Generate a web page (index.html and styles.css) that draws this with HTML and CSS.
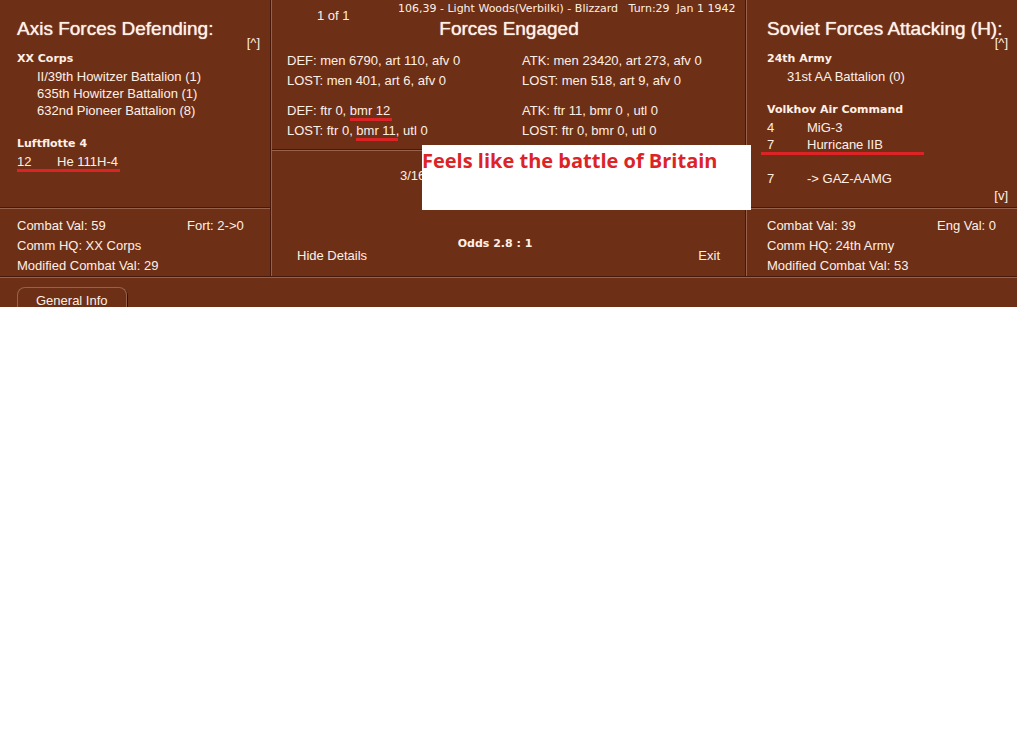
FILE: index.html
```html
<!DOCTYPE html>
<html lang="en">
<head>
<meta charset="utf-8">
<title>Forces Engaged</title>
<link rel="stylesheet" href="styles.css">
</head>
<body>
<main class="report">
  <div class="columns">
    <section class="side">
      <div class="roster">
        <h2 class="title">Axis Forces Defending:</h2>
        <button class="scroll scroll-up" type="button">[^]</button>
        <h3 class="group">XX Corps</h3>
        <ul class="units">
          <li>II/39th Howitzer Battalion (1)</li>
          <li>635th Howitzer Battalion (1)</li>
          <li>632nd Pioneer Battalion (8)</li>
        </ul>
        <h3 class="group">Luftflotte 4</h3>
        <div class="air"><div class="craft marked"><span>12</span><span>He 111H-4</span></div></div>
      </div>
      <div class="values">
        <div class="pair"><span>Combat Val: 59</span><span class="extra">Fort: 2-&gt;0</span></div>
        <div>Comm HQ: XX Corps</div>
        <div>Modified Combat Val: 29</div>
      </div>
    </section>

    <section class="middle">
      <div class="summary">
        <div class="topline"><span class="page">1 of 1</span><span class="place">106,39 - Light Woods(Verbilki) - Blizzard   Turn:29  Jan 1 1942</span></div>
        <h1 class="title">Forces Engaged</h1>
        <div class="losses">
          <div>DEF: men 6790, art 110, afv 0</div><div>ATK: men 23420, art 273, afv 0</div>
          <div>LOST: men 401, art 6, afv 0</div><div>LOST: men 518, art 9, afv 0</div>
        </div>
        <div class="losses">
          <div>DEF: ftr 0, <span class="marked">bmr 12</span></div><div>ATK: ftr 11, bmr 0 , utl 0</div>
          <div>LOST: ftr 0, <span class="marked">bmr 11</span>, utl 0</div><div>LOST: ftr 0, bmr 0, utl 0</div>
        </div>
      </div>
      <div class="outcome">
        <div class="round">3/16</div>
        <div class="odds">Odds 2.8 : 1</div>
        <div class="actions"><button type="button">Hide Details</button><button type="button">Exit</button></div>
        <p class="callout">Feels like the battle of Britain</p>
      </div>
    </section>

    <section class="side soviet">
      <div class="roster">
        <h2 class="title">Soviet Forces Attacking (H):</h2>
        <button class="scroll scroll-up" type="button">[^]</button>
        <h3 class="group">24th Army</h3>
        <ul class="units">
          <li>31st AA Battalion (0)</li>
        </ul>
        <h3 class="group">Volkhov Air Command</h3>
        <div class="air">
          <div class="craft"><span>4</span><span>MiG-3</span></div>
          <div class="craft marked"><span>7</span><span>Hurricane IIB</span></div>
          <div class="craft spaced"><span>7</span><span>-&gt; GAZ-AAMG</span></div>
        </div>
        <button class="scroll scroll-down" type="button">[v]</button>
      </div>
      <div class="values">
        <div class="pair"><span>Combat Val: 39</span><span class="extra">Eng Val: 0</span></div>
        <div>Comm HQ: 24th Army</div>
        <div>Modified Combat Val: 53</div>
      </div>
    </section>
  </div>
  <nav class="tabs"><button class="tab" type="button">General Info</button></nav>
</main>
</body>
</html>
```
FILE: styles.css
```css
* { box-sizing: border-box; }

body {
  margin: 0;
  background: #fff;
  color: #fff0e6;
  font: 13px/20px "Liberation Sans", Arial, sans-serif;
}

h1, h2, h3, ul, p { margin: 0; padding: 0; }
ul { list-style: none; }

button {
  padding: 0;
  border: 0;
  background: none;
  color: inherit;
  font: inherit;
}

.report { background: #6d2f16; overflow: hidden; }

.columns {
  display: grid;
  grid-template-columns: 272px 1fr 270px;
  border-bottom: 1px solid #48190a;
  box-shadow: 0 1px #96624c;
}

.side { display: flex; flex-direction: column; }

.roster {
  position: relative;
  flex: 1;
  min-height: 209px;
  padding: 17px 0 0 17px;
  border-bottom: 1px solid #96624c;
  box-shadow: inset 0 -1px #48190a;
  line-height: 17px;
}
.soviet .roster { padding-left: 20px; }

.title {
  font-size: 19px;
  font-weight: 400;
  line-height: 24px;
  text-shadow: 0 0 1px #fff0e6;
  white-space: nowrap;
}

.scroll { position: absolute; right: 12px; line-height: 16px; }
.soviet .scroll { right: 9px; }
.scroll-up { top: 35px; }
.scroll-down { bottom: 4px; }

.group {
  margin-top: 9px;
  font: bold 11px/17px "DejaVu Sans", Verdana, sans-serif;
}
.units { padding: 1px 0 0 20px; }
.units + .group { margin-top: 16px; }

.air { display: flex; flex-direction: column; align-items: flex-start; padding-top: 1px; }
.craft { display: grid; grid-template-columns: 40px auto; }
.spaced { margin-top: 17px; }

.marked { position: relative; }
.marked::after {
  content: "";
  position: absolute;
  right: -2px;
  bottom: -2px;
  left: 0;
  height: 3px;
  background: #dc2427;
}
.summary .marked::after { bottom: -3px; }
.soviet .marked::after { right: -41px; left: -6px; }

.values { padding: 7px 0 0 17px; }
.soviet .values { padding-left: 20px; }
.pair { display: grid; grid-template-columns: 170px auto; }

.middle {
  position: relative;
  z-index: 1;
  display: flex;
  flex-direction: column;
  border: solid #96624c;
  border-width: 0 1px;
  box-shadow: -1px 0 #48190a, inset -1px 0 #48190a;
  margin-left: -1px;
}

.summary {
  padding-bottom: 9px;
  border-bottom: 1px solid #96624c;
  box-shadow: inset 0 -1px #48190a;
}
.topline { display: flex; height: 17px; padding-left: 45px; }
.page { flex: 0 0 81px; line-height: 31px; }
.place {
  font: 11px/18px "DejaVu Sans", Verdana, sans-serif;
  white-space: pre;
}
.middle .title { text-align: center; }
.losses {
  display: grid;
  grid-template-columns: 1fr 1fr;
  column-gap: 25px;
  margin-top: 10px;
  padding: 0 14px 0 15px;
}

.outcome {
  position: relative;
  display: flex;
  flex: 1;
  flex-direction: column;
}
.round { padding: 15px 0 0 128px; }
.odds {
  margin-top: auto;
  padding-right: 28px;
  font: bold 11px/10px "DejaVu Sans", Verdana, sans-serif;
  text-align: center;
}
.actions {
  display: flex;
  justify-content: space-between;
  padding: 0 26px 13px 25px;
  line-height: 14px;
}

.callout {
  position: absolute;
  top: -6px;
  right: -5px;
  width: 329px;
  height: 65px;
  background: #fff;
  color: #dc2427;
  font: bold 20px/31px "Open Sans", "Noto Sans", sans-serif;
  white-space: nowrap;
}

.tabs { display: flex; padding: 10px 17px 0; }
.tab {
  height: 20px;
  padding: 4px 18px 0;
  border: 1px solid #96624c;
  border-bottom: 0;
  border-radius: 8px 8px 0 0;
  box-shadow: 1px 1px #30100a;
  line-height: 18px;
}
```
